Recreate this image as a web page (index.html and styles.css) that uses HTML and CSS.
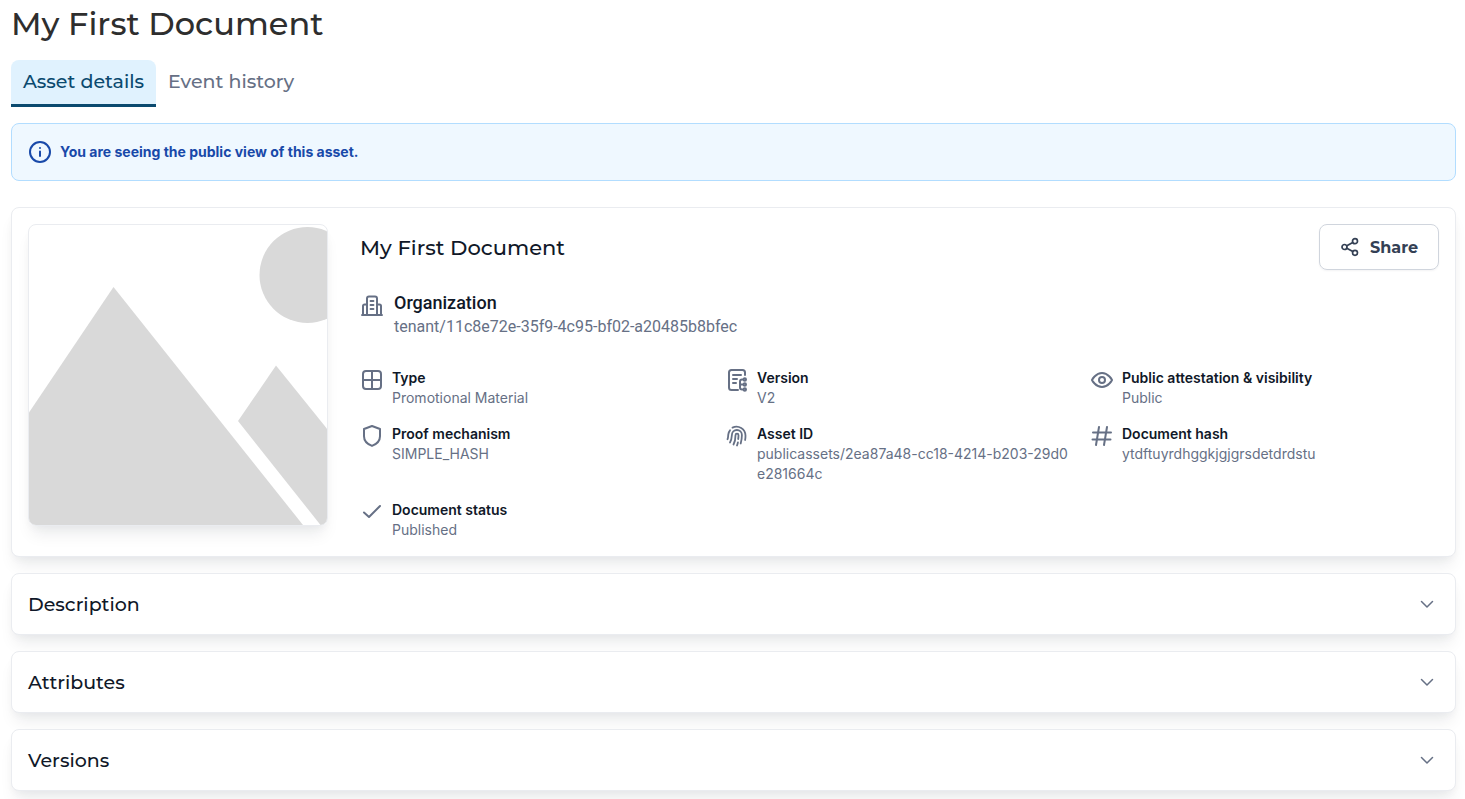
FILE: index.html
```html
<!DOCTYPE html>
<html lang="en">
<head>
<meta charset="utf-8">
<title>My First Document</title>
<link rel="stylesheet" href="styles.css">
</head>
<body>
<main class="page">
  <h1 class="page-title">My First Document</h1>
  <div class="tabs" role="tablist">
    <button class="tab tab-active" role="tab" aria-selected="true">Asset details</button>
    <button class="tab" role="tab" aria-selected="false">Event history</button>
  </div>
  <div class="alert" role="status">
    <svg class="icon" viewBox="0 0 24 24"><circle cx="12" cy="12" r="10"/><path d="M12 16v-4.500M12 8v.01"/></svg>
    <span>You are seeing the public view of this asset.</span>
  </div>
  <section class="card asset">
    <svg class="preview" viewBox="0 0 298 300" preserveAspectRatio="xMidYMid slice" role="img" aria-label="Placeholder preview">
      <circle cx="278.500" cy="50" r="48"/>
      <path d="M84.500 62 274 300H-1V189z"/>
      <path d="M247 140.500 209 196 291.500 300H299V205z"/>
    </svg>
    <div class="asset-body">
      <div class="asset-head">
        <h2 class="asset-title">My First Document</h2>
        <button class="share">
          <svg class="icon-small" viewBox="0 0 20 20"><circle cx="15" cy="4.200" r="2.500"/><circle cx="4.500" cy="10" r="2.500"/><circle cx="15" cy="15.800" r="2.500"/><path d="m6.800 8.800 6-3.400M6.800 11.200l6 3.400"/></svg>
          Share
        </button>
      </div>
      <dl class="organization">
        <svg class="icon" viewBox="0 0 24 24"><path d="M2 21h20M3 21v-9a1.500 1.500 0 0 1 1.500-1.500H7M7 21V4.500A2 2 0 0 1 9 2.500h6a2 2 0 0 1 2 2V21M17 10.500h2.500A1.500 1.500 0 0 1 21 12v9"/><path class="thin" d="M10.500 7h3M10.500 11h3M10.500 15h3"/></svg>
        <div>
          <dt>Organization</dt>
          <dd>tenant/11c8e72e-35f9-4c95-bf02-a20485b8bfec</dd>
        </div>
      </dl>
      <dl class="facts">
        <div class="fact">
          <svg class="icon" viewBox="0 0 24 24"><rect x="3" y="3" width="18" height="18" rx="3"/><path d="M12 3v18M3 12h18"/></svg>
          <div><dt>Type</dt><dd>Promotional Material</dd></div>
        </div>
        <div class="fact">
          <svg class="icon" viewBox="0 0 24 24"><path d="M20 7V4.500A2.500 2.500 0 0 0 17.500 2h-11A2.500 2.500 0 0 0 4 4.500v15A2.500 2.500 0 0 0 6.500 22H13M8 7h8M8 11h4M8 15h3"/><path d="M18 11.500h-1a2 2 0 0 0-2 2v6a2 2 0 0 0 2 2h1M15 16.500h3"/><circle cx="19.800" cy="11.500" r="1.200"/><circle cx="19.800" cy="16.500" r="1.200"/><circle cx="19.800" cy="21.500" r="1.200"/></svg>
          <div><dt>Version</dt><dd>V2</dd></div>
        </div>
        <div class="fact">
          <svg class="icon" viewBox="0 0 24 24"><path d="M2 12S5.500 5 12 5s10 7 10 7-3.500 7-10 7S2 12 2 12z"/><circle cx="12" cy="12" r="3"/></svg>
          <div><dt>Public attestation &amp; visibility</dt><dd>Public</dd></div>
        </div>
        <div class="fact">
          <svg class="icon" viewBox="0 0 24 24"><path d="M12 2 20 5v7.200c0 5-3.900 8.100-8 9.700-4.100-1.600-8-4.700-8-9.700V5z"/></svg>
          <div><dt>Proof mechanism</dt><dd>SIMPLE_HASH</dd></div>
        </div>
        <div class="fact">
          <svg class="icon" viewBox="0 0 24 24"><path class="thin" d="M7.500 3.600A9 9 0 0 1 20.500 11.500c0 1.500 0 3-.4 4.500M2.500 15.200C3.300 13.800 3 12.500 3.300 10.500 3.500 9 4 7.500 5 6.300M5 18.500c1.400-2.200 1.700-4.500 1.900-7.500A5 5 0 0 1 16.900 11c0 3-.4 5.500-1.200 8.500M8.500 20.500c1.500-2.800 2-6 2-9.300a1.500 1.500 0 0 1 3 0c0 1.400-.1 2.500-.3 3.800M12 21.500c.4-1 .7-2 .9-3"/></svg>
          <div><dt>Asset ID</dt><dd>publicassets/2ea87a48-cc18-4214-b203-29d0e281664c</dd></div>
        </div>
        <div class="fact">
          <svg class="icon" viewBox="0 0 24 24"><path d="M3 8.500h18M2.500 15.500h18M9 3 6 21M17 3 14 21"/></svg>
          <div><dt>Document hash</dt><dd>ytdftuyrdhggkjgjgrsdetdrdstu</dd></div>
        </div>
        <div class="fact">
          <svg class="icon" viewBox="0 0 24 24"><path d="m4 12.500 5 4.500L20 6"/></svg>
          <div><dt>Document status</dt><dd>Published</dd></div>
        </div>
      </dl>
    </div>
  </section>
  <h2 class="card section"><button class="section-toggle" aria-expanded="false">Description<svg class="chevron" viewBox="0 0 24 24"><path d="m6.500 9.500 5.500 5.500 5.500-5.500"/></svg></button></h2>
  <h2 class="card section"><button class="section-toggle" aria-expanded="false">Attributes<svg class="chevron" viewBox="0 0 24 24"><path d="m6.500 9.500 5.500 5.500 5.500-5.500"/></svg></button></h2>
  <h2 class="card section"><button class="section-toggle" aria-expanded="false">Versions<svg class="chevron" viewBox="0 0 24 24"><path d="m6.500 9.500 5.500 5.500 5.500-5.500"/></svg></button></h2>
</main>
</body>
</html>
```
FILE: styles.css
```css
* { box-sizing: border-box; }

body {
  margin: 0;
  background: #fff;
  color: #101828;
  font-family: Inter, "Liberation Sans", sans-serif;
}

h1, h2, dl, dd { margin: 0; }

button {
  background: none;
  border: 0;
  cursor: pointer;
}

.page-title, .tab, .asset-title, .share, .section-toggle {
  font-family: Montserrat, Inter, sans-serif;
  font-weight: 500;
}

svg {
  flex: none;
  fill: none;
  stroke: #667085;
  stroke-width: 2;
  stroke-linecap: round;
  stroke-linejoin: round;
}

.thin { stroke-width: 1.8; }
.icon { width: 24px; height: 24px; }

.icon-small {
  width: 20px;
  height: 20px;
  stroke: #344054;
  stroke-width: 1.7;
}

.page {
  display: flex;
  flex-direction: column;
  gap: 16px;
  padding: 4px 9px 8px 11px;
}

.page-title {
  color: #2e2e2e;
  font-size: 32px;
  line-height: 40px;
}

.tabs { display: flex; }

.tab {
  height: 47px;
  padding: 0 12px 2px;
  border-bottom: 3px solid transparent;
  border-radius: 8px 8px 0 0;
  color: #667085;
  font-size: 19px;
}

.tab-active {
  border-color: #0b4a6f;
  background: #e0f2fe;
  color: #0b4a6f;
}

.alert {
  display: flex;
  align-items: center;
  gap: 8px;
  min-height: 58px;
  margin-bottom: 10px;
  padding: 0 16px;
  border: 1px solid #b2ddff;
  border-radius: 8px;
  background: #eff8ff;
  color: #1849a9;
  font-size: 14px;
  font-weight: 700;
  line-height: 20px;
}

.alert svg { stroke: #1849a9; }

.card {
  border: 1px solid #eaecf0;
  border-radius: 8px;
  background: #fff;
  box-shadow: 0 12px 16px -4px rgba(16, 24, 40, 0.08), 0 4px 8px -2px rgba(16, 24, 40, 0.04);
}

.asset {
  display: flex;
  align-items: flex-start;
  gap: 32px;
  padding: 16px;
}

.preview {
  width: 300px;
  height: 302px;
  border: 1px solid #eaecf0;
  border-radius: 8px;
  box-shadow: 0 12px 16px -4px rgba(16, 24, 40, 0.08), 0 4px 8px -2px rgba(16, 24, 40, 0.04);
  fill: #d9d9d9;
  stroke: none;
}

.asset-body {
  flex: 1;
  min-width: 0;
}

.asset-head {
  display: flex;
  align-items: center;
  justify-content: space-between;
}

.asset-title { font-size: 21px; }

.share {
  display: flex;
  align-items: center;
  gap: 10px;
  height: 46px;
  padding: 0 20px;
  border: 1px solid #d0d5dd;
  border-radius: 8px;
  box-shadow: 0 1px 2px rgba(16, 24, 40, 0.05);
  color: #344054;
  font-size: 16px;
  font-weight: 700;
}

.organization {
  display: flex;
  align-items: center;
  gap: 10px;
  margin: 21px 0 29px;
  font-family: Roboto, sans-serif;
  line-height: 24px;
}

.organization dt {
  font-size: 18px;
  font-weight: 500;
}

.organization dd {
  color: #667085;
  font-size: 16px;
}

.organization svg {
  align-self: flex-start;
  margin-top: 3px;
}

.facts {
  display: grid;
  grid-template-columns: repeat(3, 1fr);
  gap: 16px;
  font-size: 14px;
  line-height: 20px;
}

.fact {
  display: flex;
  gap: 8px;
  min-width: 0;
}

.fact > div { min-width: 0; }
.fact dt { font-weight: 600; }

.fact dd {
  color: #667085;
  word-break: break-all;
}

.section { font-size: 19px; }

.section-toggle {
  display: flex;
  align-items: center;
  justify-content: space-between;
  width: 100%;
  height: 60px;
  padding: 0 16px;
  color: #101828;
  font-size: inherit;
}

.chevron {
  width: 24px;
  height: 24px;
  stroke-width: 1.5;
}
```
